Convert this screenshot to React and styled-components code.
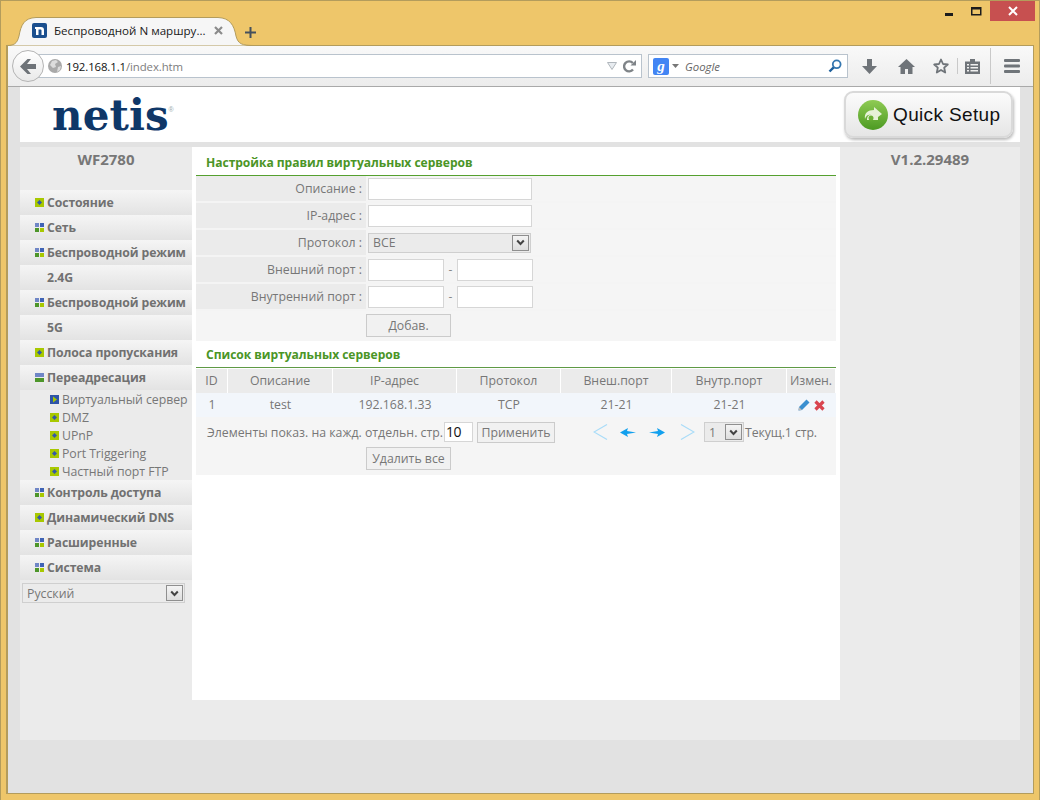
import React from 'react';
import styled, { createGlobalStyle } from 'styled-components';

const Global = createGlobalStyle`
  html, body { margin: 0; padding: 0; background: #efc76a; }
  * { box-sizing: border-box; }
`;

const Icon = styled.svg`
  flex: none; margin-left: ${p => p.$ml || 0}px; margin-right: ${p => p.$mr || 0}px;
`;

const Win = styled.div`
  width: 1040px; height: 800px; background: #eec66a;
  border: 1px solid #b39c5c; border-width: 1px 1px 0 1px;
  display: flex; flex-direction: column; overflow: hidden;
  font-family: "Open Sans", "Noto Sans", sans-serif;
`;
const TitleBar = styled.div`
  height: 44px; flex: none; display: flex; align-items: flex-start; padding: 0 4px 0 6px;
`;
const WinControls = styled.div`
  margin-left: auto; display: flex; align-items: flex-start;
`;
const WinBtn = styled.div`
  width: ${p => p.$w}px; height: 20px; display: flex; align-items: center; justify-content: center;
  background: ${p => p.$close ? '#c75050' : 'transparent'};
`;
const TabWrap = styled.div`
  position: relative; margin-top: 16px; margin-left: 8px; width: 226px; height: 29px; z-index: 2;
  display: flex; align-items: center; padding: 0 0 3px 17px; flex: none;
`;
const TabShape = styled.svg`
  position: absolute; left: -9px; top: 0; width: 248px; height: 29px; z-index: -1;
`;
const TabTitle = styled.span`
  font-size: 11.6px; color: #1a1a1a; margin-left: 7px; white-space: nowrap; width: 158px; font-family: "Open Sans", sans-serif;
`;
const PlusGlyph = styled.svg`margin: 26px 0 0 4px; flex: none;`;

const Client = styled.div`
  margin: 0 5px; height: 749px; border: 1px solid #b39c5c; border-left-width: 2px; display: flex; flex-direction: column; flex: none;
`;
const Toolbar = styled.div`
  height: 41px; flex: none; background: linear-gradient(#f9f9f9, #ececec); border-bottom: 1px solid #a9a9a9;
  display: flex; align-items: center; position: relative; padding-left: 23px;
`;
const BackBtn = styled.div`
  position: absolute; left: 4px; top: 4px; width: 32px; height: 32px; border-radius: 50%;
  background: linear-gradient(#fff, #e9e9e9); border: 1px solid #b4b4b4;
  display: flex; align-items: center; justify-content: center; z-index: 1;
`;
const UrlBar = styled.div`
  width: 611px; height: 24px; background: #fff; border: 1px solid #b9c3cd; display: flex; align-items: center;
  padding: 0 5px 0 16px; font-size: 11.4px; color: #111; flex: none; margin-right: 6px;
`;
const Dim = styled.span`color: #7d7d7d;`;
const UrlSpacer = styled.div`flex: 1;`;
const UrlText = styled.span`margin-left: 4px; letter-spacing: -0.1px;`;
const SearchBar = styled.div`
  width: 200px; height: 24px; background: #fff; border: 1px solid #b9c3cd; display: flex; align-items: center;
  padding: 0 5px 0 4px; flex: none;
`;
const GLogo = styled.div`
  width: 16px; height: 17px; background: #4285f4; border-radius: 2px; color: #fff; font: italic 700 15px "Liberation Serif", serif;
  display: flex; align-items: center; justify-content: center; flex: none;
`;
const SearchHint = styled.span`
  font: italic 11.4px "Open Sans", sans-serif; color: #666; margin-left: 6px; flex: 1;
`;
const ToolIcons = styled.div`
  display: flex; align-items: center; height: 100%; flex: 1; padding-left: 14px;
`;
const ToolSep = styled.div`
  width: 1px; height: ${p => p.$h}px; background: #c9c9c9; flex: none; margin-right: ${p => p.$mr}px;
`;

const PageBg = styled.div`
  flex: 1; background: #e2e2e2; padding-left: 12px; display: flex; flex-direction: column;
`;
const Header = styled.div`
  width: 1000px; height: 55px; background: #fff; display: flex; justify-content: space-between; flex: none;
  padding: 4px 7px 0 32px; margin-bottom: 5px;
`;
const Logo = styled.div`
  font: 700 42px "DejaVu Serif", serif; color: #0f3768; letter-spacing: 0.1px; line-height: 44px; margin-top: 3px;
  position: relative;
`;
const Reg = styled.sup`
  position: absolute; font: 400 7px "Liberation Sans", sans-serif; color: #9aa; letter-spacing: 0; top: 12px; right: -5px; line-height: 7px;
`;
const QuickBtn = styled.div`
  width: 169px; height: 47px; border: 2px solid #d9d9d9; border-radius: 9px; background: linear-gradient(#fbfbfb, #e6e6e6);
  box-shadow: 1px 2px 3px #bbb; display: flex; align-items: center; padding-left: 12px; gap: 5px;
  font: 400 19px "Liberation Sans", sans-serif; color: #111; letter-spacing: 0.35px;
`;
const Columns = styled.div`
  width: 1000px; height: 593px; background: #ebebeb; display: grid; grid-template-columns: 172px 648px 180px; flex: none;
`;
const Side = styled.div`display: flex; flex-direction: column;`;
const Model = styled.div`
  font-size: 15px; font-weight: 700; color: #777; text-align: center; height: 43px; padding-top: 2px; flex: none; line-height: 21px;
`;
const MenuItem = styled.div`
  height: 25px; background: linear-gradient(#f5f5f5, #e3e3e3); display: flex; align-items: center; padding-left: 15px;
  font-size: 12.25px; font-weight: 700; color: #717171; white-space: nowrap; letter-spacing: -0.1px;
`;
const MenuLabel = styled.span`margin-left: ${p => p.$indent ? 12 : 3}px;`;
const SubItem = styled.div`
  height: 18px; display: flex; align-items: center; padding-left: 30px; font-size: 12.3px; color: #777; white-space: nowrap; letter-spacing: -0.05px;
`;
const SubLabel = styled.span`margin-left: 3px;`;
const LangRow = styled.div`padding: 3px 0 0 2px;`;

const Select = styled.div`
  width: ${p => p.$w}px; height: 20px; margin-left: ${p => p.$ml || 0}px; background: #ebebeb; border: 1px solid #cfcfcf;
  display: flex; align-items: center; justify-content: space-between; padding: 1px 1px 1px 4px;
  font-size: 12.3px; color: #777; flex: none;
`;
const SelectArrow = styled.div`
  width: 17px; height: 100%; background: linear-gradient(#f4f4f4, #dedede); border: 1px solid #8f8f8f; display: flex; align-items: center; justify-content: center; flex: none;
`;

const Main = styled.div`
  height: 553px; background: #fff; padding: 0 4px;
`;
const SectionTitle = styled.div`
  height: ${p => p.$h}px; border-bottom: 1px solid ${p => p.$line || '#55a02f'}; color: #4b9526; font-size: 12.1px; font-weight: 700;
  padding-left: 10px; display: flex; align-items: center; padding-top: ${p => p.$pt || 0}px; letter-spacing: -0.05px;
`;
const FormRow = styled.div`
  display: grid; grid-template-columns: 170px 1fr; height: 27px; border-bottom: 2px solid #f4f4f4;
  background: #f5f5f5;
`;
const Label = styled.div`
  background: #ebebeb; color: #777; font-size: 12.3px; text-align: right; padding-right: 4px; line-height: 26px; height: 25px;
`;
const Field = styled.div`
  display: flex; align-items: center; padding-left: 2px; height: 25px;
`;
const TextInput = styled.div`
  width: ${p => p.$w}px; height: ${p => p.$h || 22}px; margin-left: ${p => p.$ml || 0}px; background: #fff; border: 1px solid #d6d6d6; flex: none;
  font-size: 14px; color: #111; line-height: 18px; padding-left: 1px; letter-spacing: -0.6px;
`;
const Dash = styled.span`width: 13px; text-align: center; color: #888; font-size: 12px;`;
const ActionRow = styled.div`
  background: #f5f5f5; height: 30px; padding: 3px 0 0 170px;
`;
const Btn = styled.div`
  width: ${p => p.$w}px; height: ${p => p.$h || 23}px; margin-left: ${p => p.$ml || 0}px; background: #f1f1f1; border: 1px solid #cbcbcb;
  display: flex; align-items: center; justify-content: center; font-size: 12.3px; color: #777; flex: none;
`;
const Grid = styled.div`
  display: grid; grid-template-columns: 32px 105px 124px 104px 111px 115px 49px;
`;
const HeadCell = styled.div`
  background: #ebebeb; height: 24px; margin: 1px 1px 0 0; color: #777; font-size: 12.3px; text-align: center; line-height: 23px; white-space: nowrap;
`;
const BodyCell = styled.div`
  background: #f2f6fb; height: 24px; color: #777; font-size: 12.3px; text-align: center; line-height: 26px; display: flex; align-items: center; justify-content: center; gap: ${p => p.$gap || 0}px;
`;
const Footer = styled.div`background: #f5f5f5; height: 58px;`;
const PagerRow = styled.div`
  display: flex; align-items: center; padding: 3px 0 0 11px; height: 27px; color: #777; font-size: 12.3px; white-space: nowrap;
`;
const DeleteRow = styled.div`padding: 3px 0 0 170px;`;
const PagerText = styled.span`margin-left: 1px; letter-spacing: -0.1px;`;

const Squares = () => (
  <Icon width="9" height="9" viewBox="0 0 9 9">
    <rect width="4" height="4" fill="#6f86c6" /><rect x="5" width="4" height="4" fill="#3f63b5" />
    <rect y="5" width="4" height="4" fill="#4d962a" /><rect x="5" y="5" width="4" height="4" fill="#a8c800" />
  </Icon>
);
const Dot = () => (
  <Icon width="9" height="9" viewBox="0 0 9 9">
    <rect width="9" height="9" fill="#a8c800" /><path d="M4.5 2 7 4.5 4.5 7 2 4.5z" fill="#3558a8" />
  </Icon>
);
const Bars = () => (
  <Icon width="9" height="9" viewBox="0 0 9 9">
    <rect width="9" height="4" fill="#6f86c6" /><rect y="5" width="9" height="4" fill="#4d962a" />
  </Icon>
);
const Active = () => (
  <Icon width="9" height="9" viewBox="0 0 9 9">
    <rect width="9" height="9" fill="#2f55a8" /><path d="M3 1.5 7 4.5 3 7.5z" fill="#a8c800" />
  </Icon>
);
const Chevron = () => (
  <svg width="9" height="7" viewBox="0 0 9 7"><path d="M1.2 1.5 4.5 5 7.8 1.5" fill="none" stroke="#444" strokeWidth="2" /></svg>
);

const menuA = [
  [Dot, 'Состояние'], [Squares, 'Сеть'], [Squares, 'Беспроводной режим'], [null, '2.4G'],
  [Squares, 'Беспроводной режим'], [null, '5G'], [Dot, 'Полоса пропускания'], [Bars, 'Переадресация'],
];
const subs = [[Active, 'Виртуальный сервер'], [Dot, 'DMZ'], [Dot, 'UPnP'], [Dot, 'Port Triggering'], [Dot, 'Частный порт FTP']];
const menuB = [[Squares, 'Контроль доступа'], [Dot, 'Динамический DNS'], [Squares, 'Расширенные'], [Squares, 'Система']];

const renderMenu = list => list.map(([I, t], i) => (
  <MenuItem key={i}>{I && <I />}<MenuLabel $indent={!I}>{t}</MenuLabel></MenuItem>
));

export default function App() {
  return (
    <>
      <Global />
      <Win>
        <TitleBar>
          <TabWrap>
            <TabShape viewBox="0 0 248 29">
              <path d="M0 28.5C8 28.5 11 27 13 19 15 8 18 1 30 .5H212C224 1 228 8 230 19 232 27 236 28.5 248 28.5" fill="#f6f6f6" stroke="#b39c5c" />
            </TabShape>
            <Icon width="15" height="15" viewBox="0 0 15 15">
              <rect width="15" height="15" rx="2" fill="#1b4f8e" />
              <path d="M3 4h6c2 0 3 1 3 3v5H9.500V7.500C9.500 6.800 9 6.500 8.500 6.500H6.500V12H4V6H3z" fill="#fff" />
            </Icon>
            <TabTitle>Беспроводной N маршру...</TabTitle>
            <Icon $ml={2} width="9" height="9" viewBox="0 0 9 9">
              <path d="M1 1 8 8M8 1 1 8" stroke="#8b8b8b" strokeWidth="2.200" />
            </Icon>
          </TabWrap>
          <PlusGlyph width="11" height="11" viewBox="0 0 11 11">
            <path d="M5.500 0v11M0 5.500h11" stroke="#45505c" strokeWidth="2" />
          </PlusGlyph>
          <WinControls>
            <WinBtn $w={28}><svg width="9" height="9" viewBox="0 0 9 9"><rect y="6" width="8" height="3" fill="#1c1c1c" /></svg></WinBtn>
            <WinBtn $w={27}><svg width="11" height="9" viewBox="0 0 11 9"><rect x=".75" y=".75" width="9" height="7" fill="none" stroke="#1c1c1c" strokeWidth="1.500" /><rect width="10" height="2.500" fill="#1c1c1c" /></svg></WinBtn>
            <WinBtn $w={45} $close><svg width="10" height="10" viewBox="0 0 10 10"><path d="M1 1 9 9M9 1 1 9" stroke="#fff" strokeWidth="2" /></svg></WinBtn>
          </WinControls>
        </TitleBar>
        <Client>
          <Toolbar>
            <BackBtn>
              <svg width="17" height="15" viewBox="0 0 17 15"><path d="M0 7.500 7.500 0h3.500L7 5h9v5H7l4 5H7.500z" fill="#6e7378" /></svg>
            </BackBtn>
            <UrlBar>
              <Icon width="14" height="14" viewBox="0 0 14 14">
                <circle cx="7" cy="7" r="7" fill="#a9a9a9" />
                <path d="M4 2 8 1 10 3 7 5 8 8 5 9 2 6zM10 8l3-1-1 4-3 2z" fill="#dcdcdc" />
              </Icon>
              <UrlText>192.168.1.1<Dim>/index.htm</Dim></UrlText>
              <UrlSpacer />
              <Icon $mr={6} width="10" height="8" viewBox="0 0 10 8"><path d="M.5.500h9L5 7.500z" fill="#e8ecf0" stroke="#b0b6bc" /></Icon>
              <Icon width="13" height="13" viewBox="0 0 13 13"><path d="M10 9.500A5 5 0 1 1 9.800 3" fill="none" stroke="#7f8488" strokeWidth="2.400" /><path d="M7.500 5.500H13V0z" fill="#7f8488" /></Icon>
            </UrlBar>
            <SearchBar>
              <GLogo>g</GLogo>
              <Icon $ml={3} width="7" height="4" viewBox="0 0 7 4"><path d="M0 0h7L3.500 4z" fill="#777" /></Icon>
              <SearchHint>Google</SearchHint>
              <Icon width="14" height="14" viewBox="0 0 14 14"><circle cx="8.700" cy="5.300" r="3.900" fill="none" stroke="#3577b0" strokeWidth="1.800" /><path d="M1.500 12.500 5.700 8.300" stroke="#1d5f9c" strokeWidth="2.400" /></Icon>
            </SearchBar>
            <ToolIcons>
              <Icon $mr={21} width="15" height="15" viewBox="0 0 15 15"><path d="M5 0h5v7h5l-7.500 8L0 7h5z" fill="#6f7479" /></Icon>
              <Icon $mr={18} width="17" height="15" viewBox="0 0 17 15"><path d="M8.500 0 17 8h-2.500v7H10v-5H7v5H2.500V8H0z" fill="#6f7479" /></Icon>
              <Icon $mr={8} width="16" height="16" viewBox="0 0 16 16"><path d="M8 1.500 10 6l4.800.5-3.600 3.200 1 4.800L8 12l-4.200 2.500 1-4.800L1.200 6.500 6 6z" fill="none" stroke="#6f7479" strokeWidth="1.800" strokeLinejoin="round" /></Icon>
              <ToolSep $h={16} $mr={7} />
              <Icon $mr={10} width="15" height="16" viewBox="0 0 15 16"><path d="M0 3.500h5V1h5v2.500h5V16H0z" fill="#6f7479" /><path d="M2 6h2v1.500H2zM5.500 6H13v1.500H5.500zM2 9h2v1.500H2zM5.500 9H13v1.500H5.500zM2 12h2v1.500H2zM5.500 12H13v1.500H5.500z" fill="#f0f0f0" /></Icon>
              <ToolSep $h={36} $mr={13} />
              <Icon width="16" height="14" viewBox="0 0 16 14"><rect width="16" height="3" rx="1" fill="#6f7479" /><rect y="5.500" width="16" height="3" rx="1" fill="#6f7479" /><rect y="11" width="16" height="3" rx="1" fill="#6f7479" /></Icon>
            </ToolIcons>
          </Toolbar>
          <PageBg>
            <Header>
              <Logo>netis<Reg>®</Reg></Logo>
              <QuickBtn>
                <Icon width="30" height="30" viewBox="0 0 30 30">
                  <defs><linearGradient id="qs" x1="0" y1="0" x2="0" y2="1"><stop offset="0" stopColor="#8fcb54" /><stop offset="1" stopColor="#4c9a22" /></linearGradient></defs>
                  <circle cx="15" cy="15" r="15" fill="url(#qs)" />
                  <path d="M7 19c-1-6 3-9 9-9V7l8 7-8 6v-4h4v4H9c0-3 1-5 4-5-2-1-5 0-6 4z" fill="#e6f2d8" />
                  <circle cx="13" cy="18" r="2.500" fill="#6bb136" />
                </Icon>
                Quick Setup
              </QuickBtn>
            </Header>
            <Columns>
              <Side>
                <Model>WF2780</Model>
                {renderMenu(menuA)}
                {subs.map(([I, t]) => <SubItem key={t}><I /><SubLabel>{t}</SubLabel></SubItem>)}
                {renderMenu(menuB)}
                <LangRow><Select $w={163}>Русский<SelectArrow><Chevron /></SelectArrow></Select></LangRow>
              </Side>
              <Main>
                <SectionTitle $h={29} $pt={2}>Настройка правил виртуальных серверов</SectionTitle>
                <FormRow><Label>Описание :</Label><Field><TextInput $w={164} /></Field></FormRow>
                <FormRow><Label>IP-адрес :</Label><Field><TextInput $w={164} /></Field></FormRow>
                <FormRow><Label>Протокол :</Label><Field><Select $w={163}>ВСЕ<SelectArrow><Chevron /></SelectArrow></Select></Field></FormRow>
                <FormRow><Label>Внешний порт :</Label><Field><TextInput $w={76} /><Dash>-</Dash><TextInput $w={76} /></Field></FormRow>
                <FormRow><Label>Внутренний порт :</Label><Field><TextInput $w={76} /><Dash>-</Dash><TextInput $w={76} /></Field></FormRow>
                <ActionRow><Btn $w={85}>Добав.</Btn></ActionRow>
                <SectionTitle $h={27} $line="#5f9a45">Список виртуальных серверов</SectionTitle>
                <Grid>
                  {['ID', 'Описание', 'IP-адрес', 'Протокол', 'Внеш.порт', 'Внутр.порт', 'Измен.'].map(h => <HeadCell key={h}>{h}</HeadCell>)}
                  <BodyCell>1</BodyCell><BodyCell>test</BodyCell><BodyCell>192.168.1.33</BodyCell><BodyCell>TCP</BodyCell><BodyCell>21-21</BodyCell><BodyCell>21-21</BodyCell>
                  <BodyCell $gap={4}>
                    <Icon width="12" height="12" viewBox="0 0 12 12"><path d="M8.500.5 11.500 3.500 4 11 .5 11.500 1 8z" fill="#3a8fd0" /><path d="M1 8 4 11 .5 11.500z" fill="#bbb" /></Icon>
                    <Icon width="11" height="11" viewBox="0 0 11 11"><path d="M1.500 1.500 9.500 9.500M9.500 1.500 1.500 9.500" stroke="#d9444f" strokeWidth="3.200" /></Icon>
                  </BodyCell>
                </Grid>
                <Footer>
                  <PagerRow>
                    Элементы показ. на кажд. отдельн. стр.
                    <TextInput $w={29} $h={20} $ml={1}>10</TextInput>
                    <Btn $w={78} $h={21} $ml={4}>Применить</Btn>
                    <Icon $ml={38} width="15" height="16" viewBox="0 0 15 16"><path d="M14 .5 1 8l13 7.500" fill="none" stroke="#a9dcf8" strokeWidth="1.200" /></Icon>
                    <Icon $ml={12} width="16" height="9" viewBox="0 0 16 9"><path d="M0 4.500 8 0 7 3 16 4.500 7 6 8 9z" fill="#12a0ee" /></Icon>
                    <Icon $ml={13} width="16" height="9" viewBox="0 0 16 9"><path d="M16 4.500 8 0 9 3 0 4.500 9 6 8 9z" fill="#12a0ee" /></Icon>
                    <Icon $ml={15} width="15" height="16" viewBox="0 0 15 16"><path d="M1 .5 14 8 1 15.500" fill="none" stroke="#a9dcf8" strokeWidth="1.200" /></Icon>
                    <Select $w={40} $ml={9}>1<SelectArrow><Chevron /></SelectArrow></Select>
                    <PagerText>Текущ.1 стр.</PagerText>
                  </PagerRow>
                  <DeleteRow><Btn $w={85}>Удалить все</Btn></DeleteRow>
                </Footer>
              </Main>
              <Side><Model>V1.2.29489</Model></Side>
            </Columns>
          </PageBg>
        </Client>
      </Win>
    </>
  );
}
